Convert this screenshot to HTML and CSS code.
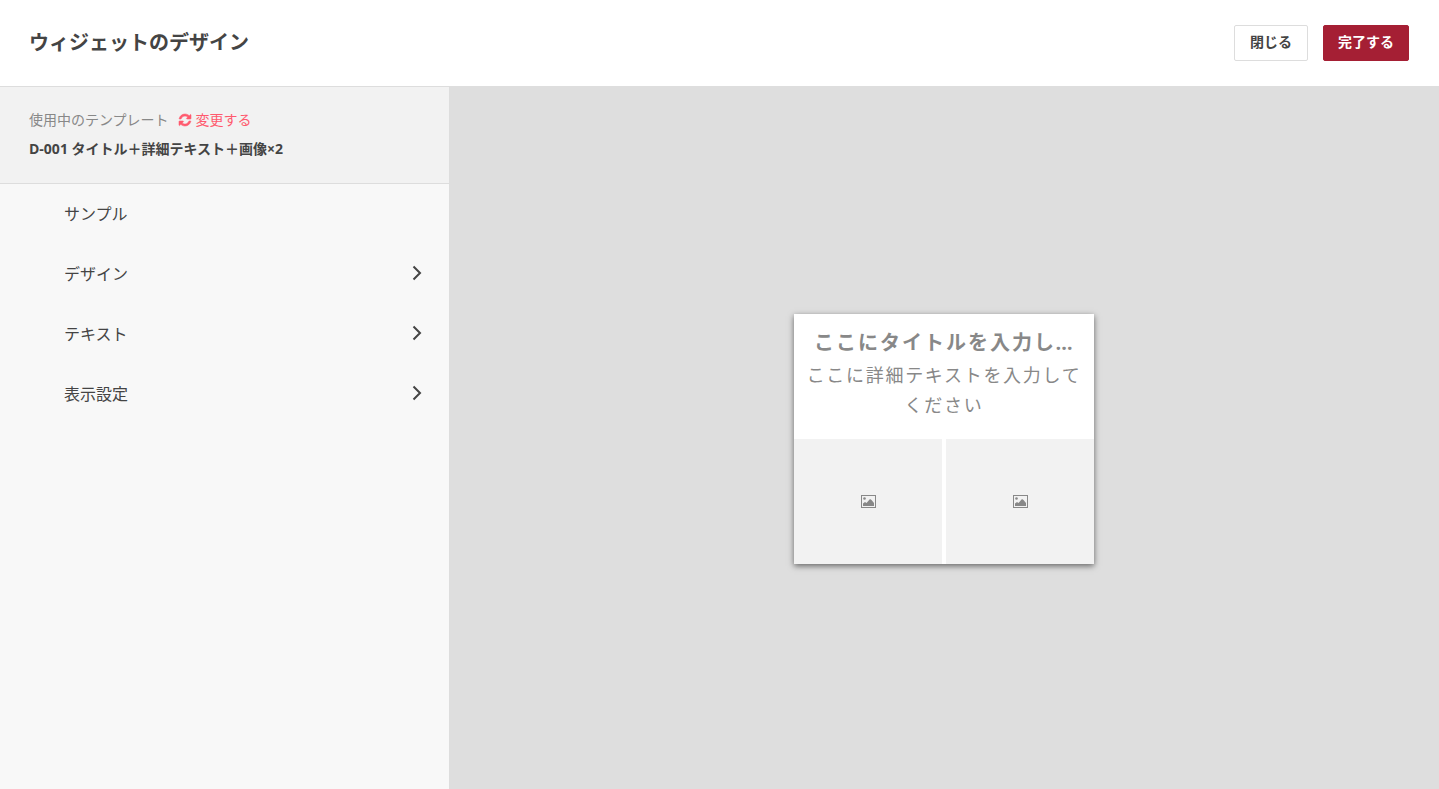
FILE: index.html
```html
<!DOCTYPE html>
<html lang="ja">
<head>
<meta charset="utf-8">
<title>ウィジェットのデザイン</title>
<link rel="stylesheet" href="styles.css">
</head>
<body>
<header class="topbar">
  <h1 class="page-title">ウィジェットのデザイン</h1>
  <div class="actions">
    <button class="btn btn-close">閉じる</button>
    <button class="btn btn-done">完了する</button>
  </div>
</header>
<div class="main">
  <aside class="sidebar">
    <section class="template">
      <div class="template-top">
        <span class="template-label">使用中のテンプレート</span>
        <a class="change">
          <svg class="sync" viewBox="0 0 1536 1536"><path fill="currentColor" stroke="currentColor" stroke-width="70" d="M1511 928q0 5-1 7-64 268-268 434.500T764 1536q-146 0-282.500-55T238 1324l-129 129q-19 19-45 19t-45-19-19-45V960q0-26 19-45t45-19h448q26 0 45 19t19 45-19 45l-137 137q71 66 161 102t187 36q134 0 250-65t186-179q11-17 53-117 8-23 30-23h192q13 0 22.500 9.500t9.500 22.500zm25-800v448q0 26-19 45t-45 19h-448q-26 0-45-19t-19-45 19-45l138-138Q969 256 768 256q-134 0-250 65T332 500q-11 17-53 117-8 23-30 23H50q-13 0-22.500-9.500T18 608v-7q65-268 270-434.500T768 0q146 0 284 55.500T1297 212l130-129q19-19 45-19t45 19 19 45z"/></svg>
          <span>変更する</span>
        </a>
      </div>
      <div class="template-name">D-001 タイトル＋詳細テキスト＋画像×2</div>
    </section>
    <nav class="menu">
      <div class="menu-item"><span>サンプル</span></div>
      <div class="menu-item"><span>デザイン</span>
        <svg class="chev" viewBox="0 0 12 16"><path d="M2.500 1.500 9 8l-6.500 6.500" /></svg>
      </div>
      <div class="menu-item"><span>テキスト</span>
        <svg class="chev" viewBox="0 0 12 16"><path d="M2.500 1.500 9 8l-6.500 6.500" /></svg>
      </div>
      <div class="menu-item"><span>表示設定</span>
        <svg class="chev" viewBox="0 0 12 16"><path d="M2.500 1.500 9 8l-6.500 6.500" /></svg>
      </div>
    </nav>
  </aside>
  <main class="canvas">
    <article class="widget">
      <div class="widget-text">
        <div class="widget-title">ここにタイトルを入力してください</div>
        <div class="widget-detail">ここに詳細テキストを入力してください</div>
      </div>
      <div class="widget-images">
        <div class="placeholder">
          <svg class="pic" viewBox="0 0 15 13"><rect x=".5" y=".5" width="14" height="12" fill="none" stroke="currentColor"/><circle cx="3.500" cy="3.500" r="1.300" fill="currentColor"/><path fill="currentColor" d="M2 11V8.500L4 7l1.500 1L9 4l1.500 1L13 8v3z"/></svg>
        </div>
        <div class="placeholder">
          <svg class="pic" viewBox="0 0 15 13"><rect x=".5" y=".5" width="14" height="12" fill="none" stroke="currentColor"/><circle cx="3.500" cy="3.500" r="1.300" fill="currentColor"/><path fill="currentColor" d="M2 11V8.500L4 7l1.500 1L9 4l1.500 1L13 8v3z"/></svg>
        </div>
      </div>
    </article>
  </main>
</div>
</body>
</html>
```

FILE: styles.css
```css
* { box-sizing: border-box; }
html, body { height: 100%; }
body {
  margin: 0;
  height: 789px;
  overflow: hidden;
  display: flex;
  flex-direction: column;
  background: #fff;
  color: #444;
  font-family: "Open Sans", "Noto Sans CJK JP", sans-serif;
}
.topbar {
  height: 86px;
  flex: none;
  display: flex;
  align-items: center;
  justify-content: space-between;
  padding: 0 30px 0 29px;
  background: #fff;
}
.page-title {
  margin: 0;
  font-size: 20px;
  font-weight: 700;
  line-height: 30px;
  color: #444;
}
.actions { display: flex; gap: 15px; }
.btn {
  height: 36px;
  border-radius: 2px;
  font-family: inherit;
  font-size: 14px;
  font-weight: 700;
  line-height: 20px;
  padding: 0 0 3px;
}
.btn-close {
  width: 74px;
  background: #fff;
  border: 1px solid #ddd;
  color: #444;
}
.btn-done {
  width: 86px;
  background: #a51f34;
  border: 1px solid #a51f34;
  color: #fff;
}
.main { flex: 1; display: flex; min-height: 0; }
.sidebar {
  width: 450px;
  flex: none;
  background: #f8f8f8;
  border-top: 1px solid #ddd;
  border-right: 1px solid #ddd;
}
.template {
  height: 97px;
  padding: 22px 29px 0;
  background: #f2f2f2;
  border-bottom: 1px solid #ddd;
}
.template-top {
  display: flex;
  align-items: center;
  gap: 10px;
  height: 20px;
  font-size: 14px;
}
.template-label { color: #888; }
.change {
  display: flex;
  align-items: center;
  gap: 5px;
  color: #ff5a6e;
}
.sync { width: 12px; height: 12px; margin-top: 2px; overflow: visible; }
.template-name {
  margin-top: 10px;
  font-size: 14px;
  font-weight: 700;
  line-height: 20px;
  color: #444;
}
.menu { display: flex; flex-direction: column; }
.menu-item {
  height: 60px;
  padding: 0 26px 2px 64px;
  display: flex;
  align-items: center;
  justify-content: space-between;
  font-size: 16px;
  color: #444;
}
.chev {
  width: 12px;
  height: 16px;
  fill: none;
  stroke: #444;
  stroke-width: 2;
}
.canvas {
  flex: 1;
  background: #dedede;
  display: flex;
  justify-content: center;
  padding: 228px 1px 0 0;
}
.widget {
  width: 300px;
  height: 250px;
  background: #fff;
  box-shadow: 0 2px 6px rgba(0, 0, 0, .55);
  display: flex;
  flex-direction: column;
}
.widget-text {
  height: 125px;
  padding: 14px 10px 0;
  color: #888;
  text-align: center;
}
.widget-title {
  font-size: 20px;
  font-weight: 700;
  letter-spacing: 2px;
  line-height: 30px;
  margin: 0 10px;
  white-space: nowrap;
  overflow: hidden;
  text-overflow: ellipsis;
}
.widget-detail {
  margin-top: 2px;
  font-size: 18px;
  letter-spacing: 1.700px;
  line-height: 30px;
}
.widget-images {
  flex: 1;
  display: flex;
  gap: 4px;
}
.placeholder {
  flex: 1;
  background: #f2f2f2;
  display: flex;
  align-items: center;
  justify-content: center;
  color: #888;
}
.pic { width: 15px; height: 13px; }
```
